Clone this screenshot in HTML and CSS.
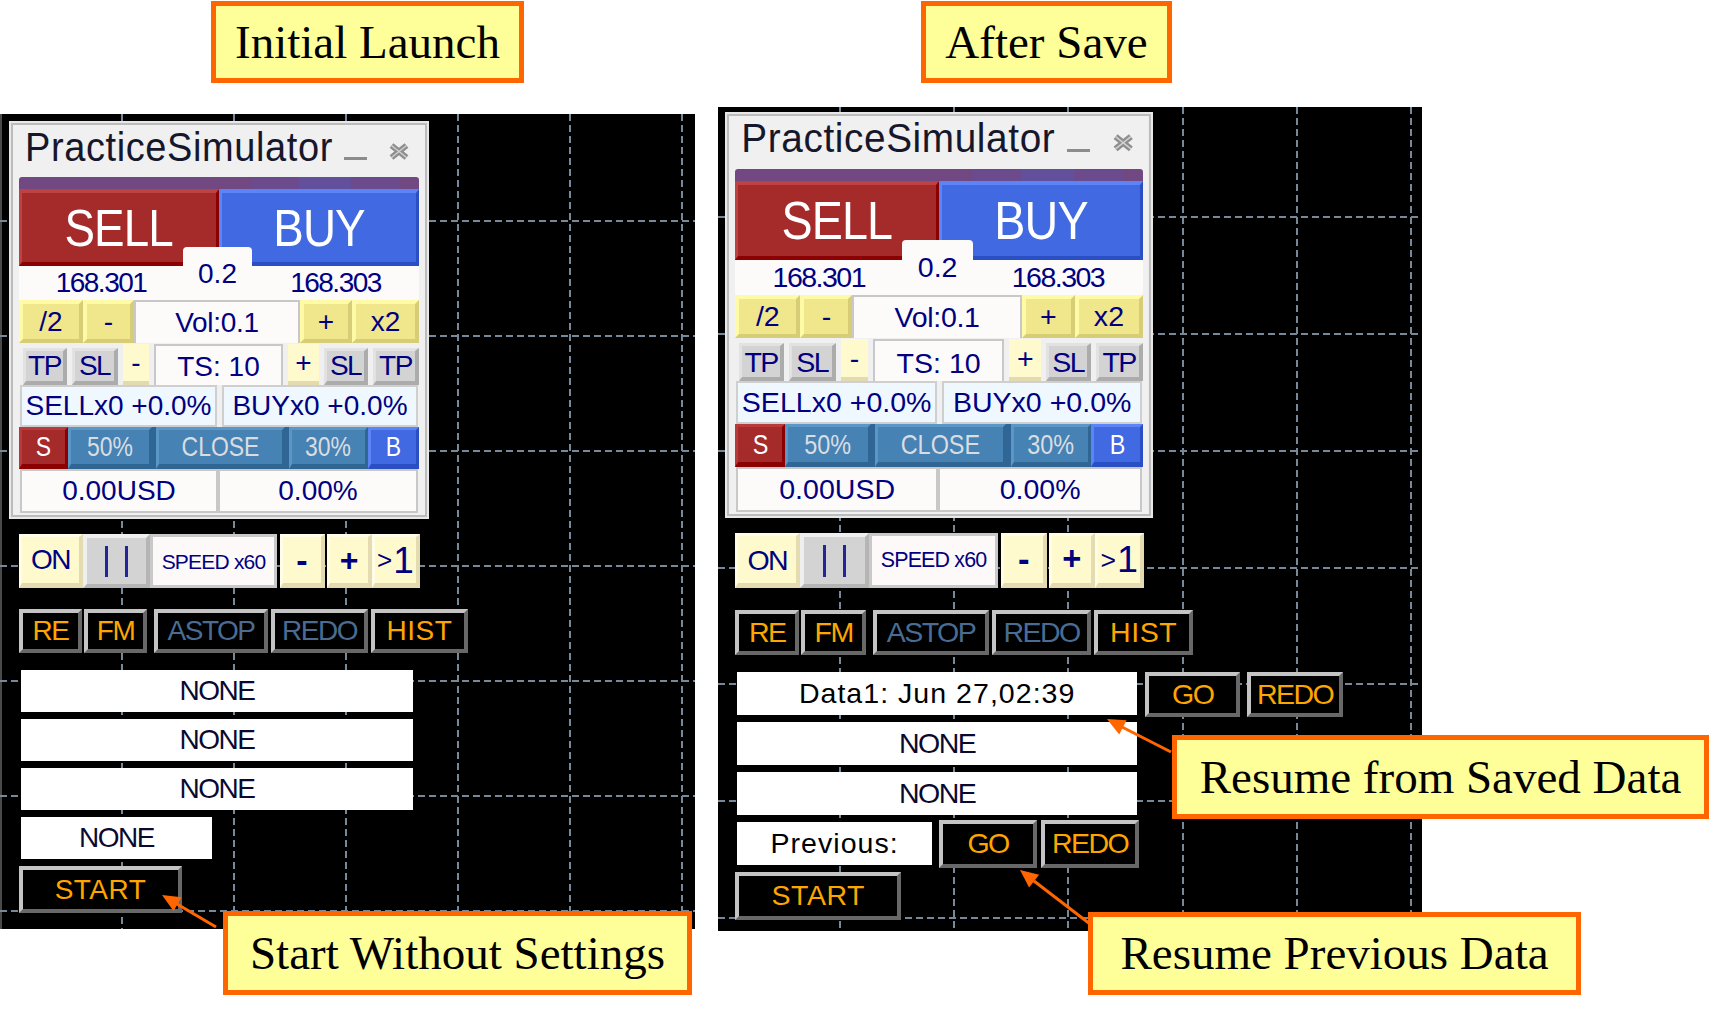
FILE: index.html
```html
<!DOCTYPE html>
<html lang="en">
<head>
<meta charset="utf-8">
<title>PracticeSimulator: Initial Launch and After Save</title>
<link rel="stylesheet" href="styles.css">
</head>
<body>
<main class="figure">

  <section class="state state-initial">
    <div class="label label-initial">Initial Launch</div>
    <div class="chart chart-initial">
      <svg class="grid" width="695" height="815" viewBox="0 0 695 815" aria-hidden="true">
        <rect x="0" y="0" width="2" height="815" fill="#4a4a4a"/>
        <g stroke="#778899" stroke-width="2" stroke-dasharray="7 4" fill="none">
          <path d="M122 0V815M234 0V815M346 0V815M458 0V815M570 0V815M682 0V815"/>
          <path d="M0 107H695M0 222H695M0 337H695M0 452H695M0 567H695M0 682H695M0 797H695"/>
        </g>
      </svg>
      <div class="stack">
        <div class="sim">
          <div class="sim-title">
            <span class="sim-name">PracticeSimulator</span>
            <span class="sim-ctrls">
              <span class="sim-min"></span>
              <svg class="sim-close" width="22" height="19" viewBox="0 0 22 19" aria-hidden="true">
                <path d="M3.5 3.5L18.5 15.5M18.5 3.5L3.5 15.5" stroke="#8e8e8e" stroke-width="6"/>
                <path d="M3.5 3.5L18.5 15.5M18.5 3.5L3.5 15.5" stroke="#d0d0d0" stroke-width="1.5"/>
              </svg>
            </span>
          </div>
          <div class="sim-body">
            <div class="trend-bar"></div>
            <div class="trade-row">
              <div class="cell trade sell"><span>SELL</span></div>
              <div class="cell trade buy"><span>BUY</span></div>
            </div>
            <div class="price-row">
              <span class="cell">168.301</span>
              <span></span>
              <span class="cell">168.303</span>
              <div class="cell spread">0.2</div>
            </div>
            <div class="vol-row">
              <div class="cell khaki half">/2</div>
              <div class="cell khaki dec">-</div>
              <div class="cell field vol">Vol:0.1</div>
              <div class="cell khaki inc">+</div>
              <div class="cell khaki dbl">x2</div>
            </div>
            <div class="ts-row">
              <div class="cell gray tp">TP</div>
              <div class="cell gray sl">SL</div>
              <div class="cell lemon-s dec">-</div>
              <div class="cell field ts">TS: 10</div>
              <div class="cell lemon-s inc">+</div>
              <div class="cell gray sl2">SL</div>
              <div class="cell gray tp2">TP</div>
            </div>
            <div class="pos-row">
              <div class="cell pos pos-sell">SELLx0 +0.0%</div>
              <div class="cell pos pos-buy">BUYx0 +0.0%</div>
            </div>
            <div class="close-row">
              <div class="cell cbtn red"><span>S</span></div>
              <div class="cell cbtn steelb p50"><span>50%</span></div>
              <div class="cell cbtn steelb cls"><span>CLOSE</span></div>
              <div class="cell cbtn steelb p30"><span>30%</span></div>
              <div class="cell cbtn royal"><span>B</span></div>
            </div>
            <div class="bal-row">
              <div class="cell bal bal-usd">0.00USD</div>
              <div class="cell bal bal-pct">0.00%</div>
            </div>
          </div>
        </div>

        <div class="lower">
          <div class="ctrl-row">
            <div class="cell lemon on">ON</div>
            <div class="cell pause"><i></i><i></i></div>
            <div class="cell speed">SPEED x60</div>
            <div class="cell lemon step minus">-</div>
            <div class="cell lemon step plus">+</div>
            <div class="cell lemon skip"><span class="gt">&gt;</span>1</div>
          </div>
          <div class="btn-row">
            <div class="cell dbtn orange re">RE</div>
            <div class="cell dbtn orange fm">FM</div>
            <div class="cell dbtn steel astop">ASTOP</div>
            <div class="cell dbtn steel redo">REDO</div>
            <div class="cell dbtn orange hist">HIST</div>
          </div>
          <div class="slots">
            <div class="slot"><div class="cell box wide">NONE</div></div>
            <div class="slot"><div class="cell box wide">NONE</div></div>
            <div class="slot"><div class="cell box wide">NONE</div></div>
            <div class="slot"><div class="cell box narrow">NONE</div></div>
            <div class="slot slot-start"><div class="cell dbtn orange start">START</div></div>
          </div>
        </div>
      </div>
    </div>
  </section>

  <section class="state state-saved">
    <div class="label label-saved">After Save</div>
    <div class="chart chart-saved">
      <svg class="grid" width="704" height="824" viewBox="0 0 704 824" aria-hidden="true">
        <g stroke="#778899" stroke-width="2" stroke-dasharray="7 4" fill="none">
          <path d="M122 0V824M236 0V824M350 0V824M465 0V824M579 0V824M693 0V824"/>
          <path d="M0 110H704M0 227H704M0 344H704M0 461H704M0 577H704M0 694H704M0 811H704"/>
        </g>
      </svg>
      <div class="stack">
        <div class="sim">
          <div class="sim-title">
            <span class="sim-name">PracticeSimulator</span>
            <span class="sim-ctrls">
              <span class="sim-min"></span>
              <svg class="sim-close" width="22" height="19" viewBox="0 0 22 19" aria-hidden="true">
                <path d="M3.5 3.5L18.5 15.5M18.5 3.5L3.5 15.5" stroke="#8e8e8e" stroke-width="6"/>
                <path d="M3.5 3.5L18.5 15.5M18.5 3.5L3.5 15.5" stroke="#d0d0d0" stroke-width="1.5"/>
              </svg>
            </span>
          </div>
          <div class="sim-body">
            <div class="trend-bar"></div>
            <div class="trade-row">
              <div class="cell trade sell"><span>SELL</span></div>
              <div class="cell trade buy"><span>BUY</span></div>
            </div>
            <div class="price-row">
              <span class="cell">168.301</span>
              <span></span>
              <span class="cell">168.303</span>
              <div class="cell spread">0.2</div>
            </div>
            <div class="vol-row">
              <div class="cell khaki half">/2</div>
              <div class="cell khaki dec">-</div>
              <div class="cell field vol">Vol:0.1</div>
              <div class="cell khaki inc">+</div>
              <div class="cell khaki dbl">x2</div>
            </div>
            <div class="ts-row">
              <div class="cell gray tp">TP</div>
              <div class="cell gray sl">SL</div>
              <div class="cell lemon-s dec">-</div>
              <div class="cell field ts">TS: 10</div>
              <div class="cell lemon-s inc">+</div>
              <div class="cell gray sl2">SL</div>
              <div class="cell gray tp2">TP</div>
            </div>
            <div class="pos-row">
              <div class="cell pos pos-sell">SELLx0 +0.0%</div>
              <div class="cell pos pos-buy">BUYx0 +0.0%</div>
            </div>
            <div class="close-row">
              <div class="cell cbtn red"><span>S</span></div>
              <div class="cell cbtn steelb p50"><span>50%</span></div>
              <div class="cell cbtn steelb cls"><span>CLOSE</span></div>
              <div class="cell cbtn steelb p30"><span>30%</span></div>
              <div class="cell cbtn royal"><span>B</span></div>
            </div>
            <div class="bal-row">
              <div class="cell bal bal-usd">0.00USD</div>
              <div class="cell bal bal-pct">0.00%</div>
            </div>
          </div>
        </div>

        <div class="lower">
          <div class="ctrl-row">
            <div class="cell lemon on">ON</div>
            <div class="cell pause"><i></i><i></i></div>
            <div class="cell speed">SPEED x60</div>
            <div class="cell lemon step minus">-</div>
            <div class="cell lemon step plus">+</div>
            <div class="cell lemon skip"><span class="gt">&gt;</span>1</div>
          </div>
          <div class="btn-row">
            <div class="cell dbtn orange re">RE</div>
            <div class="cell dbtn orange fm">FM</div>
            <div class="cell dbtn steel astop">ASTOP</div>
            <div class="cell dbtn steel redo">REDO</div>
            <div class="cell dbtn orange hist">HIST</div>
          </div>
          <div class="slots">
            <div class="slot">
              <div class="cell box wide data">Data1: Jun 27,02:39</div>
              <div class="cell dbtn orange go-a">GO</div>
              <div class="cell dbtn orange redo-a">REDO</div>
            </div>
            <div class="slot"><div class="cell box wide">NONE</div></div>
            <div class="slot"><div class="cell box wide">NONE</div></div>
            <div class="slot">
              <div class="cell box narrow prev">Previous:</div>
              <div class="cell dbtn orange go-b">GO</div>
              <div class="cell dbtn orange redo-b">REDO</div>
            </div>
            <div class="slot slot-start"><div class="cell dbtn orange start">START</div></div>
          </div>
        </div>
      </div>
    </div>
  </section>

  <div class="callout callout-start">Start Without Settings</div>
  <div class="callout callout-saved">Resume from Saved Data</div>
  <div class="callout callout-prev">Resume Previous Data</div>

  <svg class="arrows" width="1724" height="1011" viewBox="0 0 1724 1011" aria-hidden="true">
    <g stroke="#ff6600" stroke-width="3" fill="none">
      <line x1="177" y1="904" x2="216" y2="927"/>
      <line x1="1122" y1="727" x2="1171" y2="752"/>
      <line x1="1034" y1="881" x2="1090" y2="924"/>
    </g>
    <g fill="#ff6600">
      <polygon points="162,895 181.7,897.2 173.5,911"/>
      <polygon points="1107,719 1126.6,720.3 1119.2,734.5"/>
      <polygon points="1020,870 1039.1,874.8 1029.1,887.4"/>
    </g>
  </svg>
</main>
</body>
</html>
```

FILE: styles.css
```css
* { box-sizing: border-box; }

html, body {
  margin: 0;
  padding: 0;
  background: #fff;
}

body {
  font-family: "Liberation Sans", Arial, sans-serif;
  color: #000080;
}

/* ---------- figure canvas ---------- */
.figure {
  position: relative;
  width: 1724px;
  height: 1011px;
  display: flex;
  align-items: flex-start;
  overflow: hidden;
}

.state {
  flex: none;
  display: flex;
  flex-direction: column;
  align-items: flex-start;
}
.state-initial { width: 695px; }
.state-saved { width: 704px; margin-left: 23px; }

/* ---------- yellow captions ---------- */
.label,
.callout {
  border: 5px solid #ff6600;
  background: #ffff99;
  color: #000;
  font-family: "Liberation Serif", "Times New Roman", serif;
  font-size: 47px;
  line-height: 1;
  display: flex;
  align-items: center;
  justify-content: center;
  white-space: nowrap;
}
.label { height: 82px; margin-top: 1px; }
.label-initial { width: 313px; margin-left: 211px; }
.label-saved { width: 251px; margin-left: 203px; }

.callout { position: absolute; z-index: 2; }
.callout-start { left: 223px; top: 911px; width: 469px; height: 84px; }
.callout-saved { left: 1172px; top: 735px; width: 537px; height: 84px; }
.callout-prev { left: 1088px; top: 912px; width: 493px; height: 83px; }

.arrows {
  position: absolute;
  left: 0;
  top: 0;
  z-index: 3;
  pointer-events: none;
}

/* ---------- chart window ---------- */
.chart {
  position: relative;
  flex: none;
  background: #000;
}
.chart-initial { width: 695px; height: 815px; margin-top: 31px; padding: 7px 0 0 9px; }
.chart-saved { width: 704px; height: 824px; margin-top: 24px; padding: 5px 0 0 7px; }

.grid { position: absolute; left: 0; top: 0; }

.stack { position: relative; width: max-content; }
.chart-saved .stack { zoom: 1.02; }

.cell {
  display: flex;
  align-items: center;
  justify-content: center;
  white-space: nowrap;
  line-height: 1;
}

/* ---------- simulator dialog ---------- */
.sim {
  width: 420px;
  height: 398px;
  background: #f0f0f0;
  border: 2px solid #e8e8e8;
  box-shadow: inset 0 0 0 2px #bcbcbc;
  padding: 0 8px;
  display: flex;
  flex-direction: column;
}

.sim-title {
  flex: none;
  height: 54px;
  display: flex;
  align-items: flex-start;
}
.sim-name {
  margin: 6px 0 0 6px;
  font-size: 38px;
  line-height: 38px;
  letter-spacing: 0.6px;
  color: #17172b;
  transform: scaleY(1.06);
  transform-origin: 0 100%;
}
.sim-ctrls {
  margin: 19px 9px 0 auto;
  display: flex;
  align-items: flex-end;
  gap: 21px;
}
.sim-min { width: 23px; height: 3px; background: #8c8c8c; margin-bottom: 1px; }
.sim-close { display: block; }

.sim-body {
  display: flex;
  flex-direction: column;
  font-size: 28px;
  color: #000080;
}

.trend-bar {
  height: 12px;
  border-radius: 3px 3px 0 0;
  background: linear-gradient(90deg, #724882 0 58%, #6b4b8e 58% 70%, #63509d 70% 83%, #6b4b8e 83% 95%, #724882 95%);
}

.trade-row {
  height: 77px;
  display: grid;
  grid-template-columns: 200px 200px;
}
.trade {
  color: #fff;
  font-size: 52px;
  letter-spacing: -1px;
  border-style: solid;
  border-width: 4px 3px 4px 3px;
}
.trade span { display: inline-block; transform: scaleX(0.88); }
.sell { background: #a52a2a; border-color: #bd4343 #8b0000 #8b0000 #bd4343; }
.buy { background: #4169e1; border-color: #5c84f6 #2a4fc4 #2a4fc4 #5c84f6; }

.price-row {
  position: relative;
  height: 34px;
  background: #fdfbfa;
  display: grid;
  grid-template-columns: 164px 69px 167px;
  letter-spacing: -1.5px;
}
.spread {
  position: absolute;
  left: 164px;
  top: -19px;
  width: 69px;
  height: 53px;
  background: #fdfbfa;
  border-radius: 4px 4px 0 0;
  letter-spacing: 0;
}

.vol-row { height: 43px; display: flex; }
.khaki {
  background: #f0e68c;
  border: 4px solid;
  border-color: #fffaa5 #d8cd77 #d8cd77 #fffaa5;
}
.field {
  background: #fdfbfa;
  border: 2px solid #c8c8c8;
  border-bottom: 0;
}
.vol-row .half { width: 64px; }
.vol-row .dec { width: 51px; }
.vol-row .vol { width: 166px; letter-spacing: -0.3px; }
.vol-row .inc { width: 52px; }
.vol-row .dbl { width: 67px; }

.ts-row {
  height: 42px;
  display: flex;
  gap: 5px;
  padding-left: 4px;
}
.gray {
  margin-top: 5px;
  height: 37px;
  background: #d3d3d3;
  border-style: solid;
  border-width: 3px 4px 4px 3px;
  border-color: #e2e2e2 #acacac #acacac #e2e2e2;
  letter-spacing: -1.5px;
}
.lemon-s {
  margin-top: 1px;
  height: 41px;
  background: #fffacd;
  border-bottom: 4px solid #e3dbb0;
}
.ts-row .field { margin-top: 1px; height: 41px; padding-top: 3px; }
.ts-row .tp { width: 44px; }
.ts-row .sl { width: 46px; }
.ts-row .dec { width: 26px; }
.ts-row .ts { width: 129px; }
.ts-row .inc { width: 31px; }
.ts-row .sl2 { width: 44px; }
.ts-row .tp2 { width: 46px; }

.pos-row {
  height: 42px;
  display: flex;
  gap: 5px;
  padding: 0 1px;
}
.pos {
  background: #f0f8ff;
  border: 2px solid #cfcfcf;
}
.pos-sell { width: 197px; }
.pos-buy { width: 196px; }

.close-row {
  height: 42px;
  display: flex;
  background: #2f6695;
}
.cbtn {
  border-style: solid;
  border-width: 3px 3px 5px 3px;
}
.cbtn span { display: inline-block; transform: scaleX(0.82); }
.cbtn.red { width: 49px; background: #a52a2a; border-color: #b83a3a #8b0000 #8b0000 #b83a3a; color: #fff; }
.cbtn.royal { width: 51px; background: #4169e1; border-color: #5c84f6 #2a4fc4 #2a4fc4 #5c84f6; color: #fff; }
.cbtn.steelb { background: #4682b4; border-color: #5a96c6 #2f6694 #2f6694 #5a96c6; color: #d9dde2; }
.p50 { width: 84px; }
.cls { width: 129px; margin-left: 4px; }
.p30 { width: 79px; margin-left: 4px; }

.bal-row {
  height: 44px;
  display: flex;
  padding: 0 1px;
}
.bal {
  background: #fdfbfa;
  border: 2px solid #c8c8c8;
}
.bal-usd { width: 198px; }
.bal-pct { width: 200px; }

/* ---------- controls below the dialog ---------- */
.lower {
  margin: 15px 0 0 10px;
  display: flex;
  flex-direction: column;
  font-size: 28px;
}

.ctrl-row { height: 54px; display: flex; }
.lemon {
  background: #fffacd;
  border-style: solid;
  border-width: 3px 4px 5px 3px;
  border-color: #fffde6 #e4dcb0 #e4dcb0 #fffde6;
  color: #000080;
}
.on { width: 64px; letter-spacing: -1.5px; }
.pause {
  width: 67px;
  gap: 17px;
  background: #d3d3d3;
  border: 4px solid;
  border-color: #efefef #b5b5b5 #b5b5b5 #efefef;
}
.pause i { display: block; width: 3px; height: 31px; background: #25259a; }
.speed {
  width: 127px;
  background: #fdf9f8;
  border: 3px solid #c9c9c9;
  font-size: 21px;
  letter-spacing: -0.8px;
  color: #000080;
}
.step { width: 45px; font-weight: 700; }
.minus { margin-left: 3px; font-size: 34px; }
.plus { margin-left: 2px; font-size: 32px; }
.skip { width: 48px; font-size: 37px; }
.skip .gt { font-size: 26px; margin-right: 1px; }

.btn-row { margin-top: 21px; height: 44px; display: flex; }

.dbtn {
  background: #000;
  border: 4px solid;
  border-color: #c4c4c4 #686868 #686868 #c4c4c4;
  letter-spacing: -1.5px;
}
.orange { color: #ffa500; }
.steel { color: #4a6c92; }
.re { width: 63px; }
.fm { width: 63px; margin-left: 2px; }
.astop { width: 114px; margin-left: 7px; }
.redo { width: 97px; margin-left: 3px; }
.hist { width: 97px; margin-left: 3px; letter-spacing: 0.5px; }

.slots {
  margin-top: 17px;
  display: flex;
  flex-direction: column;
  gap: 7px;
}
.slot { height: 42px; display: flex; align-items: flex-start; }
.slot-start { height: 47px; }

.box {
  height: 42px;
  margin-left: 2px;
  background: #fff;
  color: #0a0a30;
  letter-spacing: -1.5px;
}
.wide { width: 392px; }
.narrow { width: 191px; }
.data, .prev { color: #000; letter-spacing: 1px; }

.start { width: 163px; height: 47px; letter-spacing: 0.5px; }
.go-a { width: 93px; height: 44px; margin-left: 8px; }
.redo-a { width: 94px; height: 44px; margin-left: 7px; }
.go-b { width: 96px; height: 47px; margin-left: 7px; margin-top: -2px; }
.redo-b { width: 96px; height: 47px; margin-left: 4px; margin-top: -2px; }
```
